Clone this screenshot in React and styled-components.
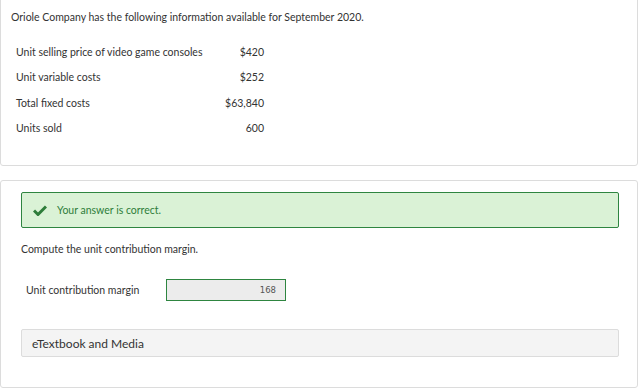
import React from "react";
import styled, { createGlobalStyle } from "styled-components";

const GlobalStyle = createGlobalStyle`
	body {
		margin: 0;
		background: #fff;
		font-family: Lato, "Liberation Sans", sans-serif;
		color: #333;
	}
`;

const Page = styled.div`
	width: 640px;
	padding-right: 2px;
	box-sizing: border-box;
`;

const Card = styled.div`
	border: 1px solid #dcdcdc;
	border-radius: 3px;
	background: #fff;
	box-sizing: border-box;
	height: ${(p) => p.h}px;
	margin-top: ${(p) => p.mt || 0}px;
	padding: ${(p) => p.pad};
`;

const Intro = styled.p`
	margin: 0;
	font-size: 10.5px;
	line-height: 14px;
`;

const Facts = styled.div`
	display: grid;
	grid-template-columns: 200px 48px;
	grid-auto-rows: 25.5px;
	align-items: center;
	margin: 15px 0 0 5px;
	font-size: 10.5px;
`;

const Value = styled.span`
	text-align: right;
`;

const Success = styled.div`
	display: flex;
	align-items: center;
	gap: 10px;
	height: 36px;
	box-sizing: border-box;
	padding-left: 11px;
	border: 1px solid #2e8540;
	border-radius: 2px;
	background: #daf2d6;
	color: #2e7d3a;
	font-size: 10.5px;
`;

const Question = styled.p`
	margin: 14px 0 0;
	font-size: 10.5px;
	line-height: 14px;
`;

const AnswerRow = styled.div`
	display: flex;
	align-items: center;
	margin: 23px 0 0 5px;
	font-size: 10.5px;
`;

const AnswerLabel = styled.span`
	width: 140px;
`;

const AnswerBox = styled.div`
	width: 120px;
	height: 22px;
	box-sizing: border-box;
	border: 1px solid #2e8540;
	background: #ececec;
	display: flex;
	align-items: center;
	justify-content: flex-end;
	padding-right: 9px;
	font-family: "DejaVu Sans", sans-serif;
	font-size: 8.5px;
	color: #555;
`;

const Media = styled.div`
	margin-top: 28px;
	height: 28px;
	box-sizing: border-box;
	border: 1px solid #dcdcdc;
	border-radius: 2px;
	background: #f4f4f4;
	display: flex;
	align-items: center;
	padding-left: 10px;
	font-size: 12px;
	color: #333;
`;

const facts = [
	["Unit selling price of video game consoles", "$420"],
	["Unit variable costs", "$252"],
	["Total fixed costs", "$63,840"],
	["Units sold", "600"],
];

const Check = () => (
	<svg width="14" height="11" viewBox="0 0 14 11">
		<path d="M1 5.5 L5 9.5 L13 1.5" fill="none" stroke="#2e7d3a" strokeWidth="3" />
	</svg>
);

export default function App() {
	return (
		<Page>
			<GlobalStyle />
			<Card h={169} mt={-3} pad="12px 10px 0">
				<Intro>Oriole Company has the following information available for September 2020.</Intro>
				<Facts>
					{facts.map(([label, value]) => (
						<React.Fragment key={label}>
							<span>{label}</span>
							<Value>{value}</Value>
						</React.Fragment>
					))}
				</Facts>
			</Card>
			<Card h={208} mt={14} pad="11px 18px 0 20px">
				<Success>
					<Check />
					<span>Your answer is correct.</span>
				</Success>
				<Question>Compute the unit contribution margin.</Question>
				<AnswerRow>
					<AnswerLabel>Unit contribution margin</AnswerLabel>
					<AnswerBox>168</AnswerBox>
				</AnswerRow>
				<Media>eTextbook and Media</Media>
			</Card>
		</Page>
	);
}
